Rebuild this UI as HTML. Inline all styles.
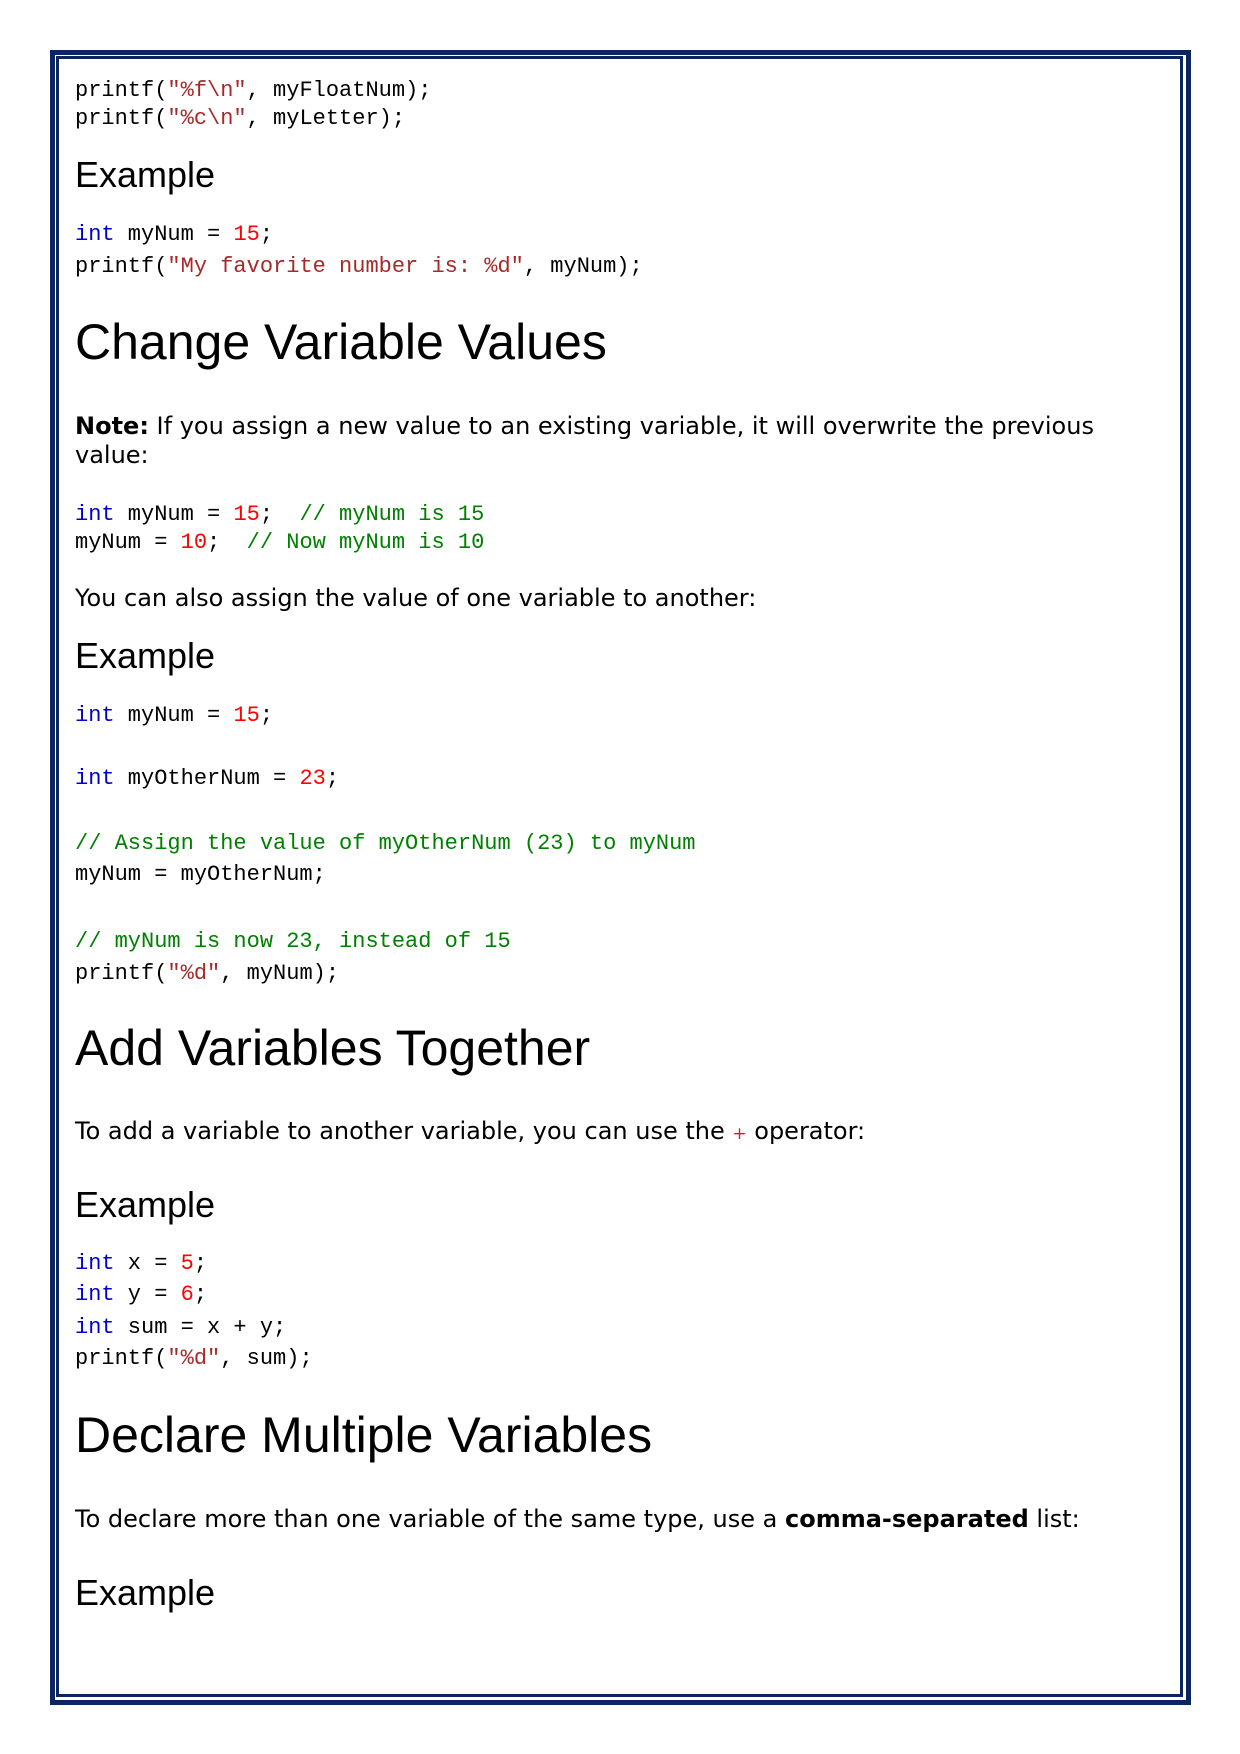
<!DOCTYPE html>
<html><head><meta charset="utf-8">
<style>
html,body{margin:0;padding:0;background:#fff;}
body{width:1240px;height:1754px;position:relative;overflow:hidden;}
.ob{position:absolute;left:50px;top:50px;width:1131px;height:1645px;border:5px solid #0b2560;}
.ib{position:absolute;left:56px;top:56px;width:1121px;height:1635px;border:3px solid #0b2560;}
.l{position:absolute;left:75px;white-space:pre;line-height:30px;height:30px;}
.c{font-family:"Liberation Mono",monospace;font-size:22px;color:#000;}
.t{font-family:"DejaVu Sans",sans-serif;font-size:24px;color:#000;}
.ex{font-family:"Liberation Sans",sans-serif;font-size:36px;line-height:44px;height:44px;}
.h{font-family:"Liberation Sans",sans-serif;font-size:50px;line-height:60px;height:60px;}
.k{color:#0000cd}.n{color:#ff0000}.s{color:#a52a2a}.g{color:#008000}
</style></head><body>
<div class="ob"></div><div class="ib"></div>

<div class="l c" style="top:76px">printf(<span class="s">"%f\n"</span>, myFloatNum);</div>
<div class="l c" style="top:104px">printf(<span class="s">"%c\n"</span>, myLetter);</div>
<div class="l ex" style="top:153px">Example</div>
<div class="l c" style="top:220px"><span class="k">int</span> myNum = <span class="n">15</span>;</div>
<div class="l c" style="top:252px">printf(<span class="s">"My favorite number is: %d"</span>, myNum);</div>
<div class="l h" style="top:312px">Change Variable Values</div>
<div class="l t" style="top:411px"><b>Note:</b> If you assign a new value to an existing variable, it will overwrite the previous</div>
<div class="l t" style="top:440px">value:</div>
<div class="l c" style="top:500px"><span class="k">int</span> myNum = <span class="n">15</span>;  <span class="g">// myNum is 15</span></div>
<div class="l c" style="top:528px">myNum = <span class="n">10</span>;  <span class="g">// Now myNum is 10</span></div>
<div class="l t" style="top:583px">You can also assign the value of one variable to another:</div>
<div class="l ex" style="top:634px">Example</div>
<div class="l c" style="top:701px"><span class="k">int</span> myNum = <span class="n">15</span>;</div>
<div class="l c" style="top:764px"><span class="k">int</span> myOtherNum = <span class="n">23</span>;</div>
<div class="l c" style="top:829px"><span class="g">// Assign the value of myOtherNum (23) to myNum</span></div>
<div class="l c" style="top:860px">myNum = myOtherNum;</div>
<div class="l c" style="top:927px"><span class="g">// myNum is now 23, instead of 15</span></div>
<div class="l c" style="top:959px">printf(<span class="s">"%d"</span>, myNum);</div>
<div class="l h" style="top:1018px">Add Variables Together</div>
<div class="l t" style="top:1116px">To add a variable to another variable, you can use the <span style="color:#dc143c;font-size:17px">+</span> operator:</div>
<div class="l ex" style="top:1183px">Example</div>
<div class="l c" style="top:1249px"><span class="k">int</span> x = <span class="n">5</span>;</div>
<div class="l c" style="top:1280px"><span class="k">int</span> y = <span class="n">6</span>;</div>
<div class="l c" style="top:1313px"><span class="k">int</span> sum = x + y;</div>
<div class="l c" style="top:1344px">printf(<span class="s">"%d"</span>, sum);</div>
<div class="l h" style="top:1405px">Declare Multiple Variables</div>
<div class="l t" style="top:1504px">To declare more than one variable of the same type, use a <b>comma-separated</b> list:</div>
<div class="l ex" style="top:1571px">Example</div>
</body></html>
